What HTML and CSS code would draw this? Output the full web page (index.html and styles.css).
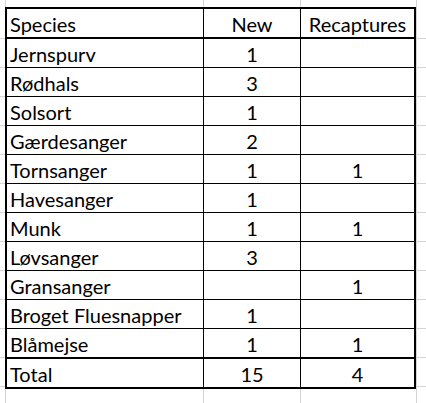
FILE: index.html
```html
<!DOCTYPE html>
<html>
<head>
<meta charset="utf-8">
<link rel="stylesheet" href="styles.css">
</head>
<body>
<div class="sheet">
  <div class="table">
    <div class="cell name head">Species</div><div class="cell num head">New</div><div class="cell num head last">Recaptures</div>
    <div class="cell name">Jernspurv</div><div class="cell num">1</div><div class="cell num last"></div>
    <div class="cell name">Rødhals</div><div class="cell num">3</div><div class="cell num last"></div>
    <div class="cell name">Solsort</div><div class="cell num">1</div><div class="cell num last"></div>
    <div class="cell name">Gærdesanger</div><div class="cell num">2</div><div class="cell num last"></div>
    <div class="cell name">Tornsanger</div><div class="cell num">1</div><div class="cell num last">1</div>
    <div class="cell name">Havesanger</div><div class="cell num">1</div><div class="cell num last"></div>
    <div class="cell name">Munk</div><div class="cell num">1</div><div class="cell num last">1</div>
    <div class="cell name">Løvsanger</div><div class="cell num">3</div><div class="cell num last"></div>
    <div class="cell name">Gransanger</div><div class="cell num"></div><div class="cell num last">1</div>
    <div class="cell name">Broget Fluesnapper</div><div class="cell num">1</div><div class="cell num last"></div>
    <div class="cell name pre">Blåmejse</div><div class="cell num pre">1</div><div class="cell num last pre">1</div>
    <div class="cell name total">Total</div><div class="cell num total">15</div><div class="cell num last total">4</div>
  </div>
</div>
</body>
</html>
```
FILE: styles.css
```css
html, body {
  margin: 0;
  padding: 0;
  background: #ffffff;
}
.sheet {
  width: 426px;
  height: 403px;
  box-sizing: border-box;
  padding: 7px 0 0 5px;
  overflow: hidden;
  background:
    linear-gradient(#d4d4d4, #d4d4d4) 5px 0 / 1px 100% no-repeat,
    linear-gradient(#d4d4d4, #d4d4d4) 203px 0 / 1px 100% no-repeat,
    linear-gradient(#d4d4d4, #d4d4d4) 300px 0 / 1px 100% no-repeat,
    linear-gradient(#d4d4d4, #d4d4d4) 416px 0 / 1px 100% no-repeat,
    repeating-linear-gradient(to bottom, transparent 0, transparent 28px, #d4d4d4 28px, #d4d4d4 29px) 0 10px / 100% 100%;
  background-color: #fff;
}
.table {
  display: grid;
  grid-template-columns: 197px 97px 113px;
  width: 411px;
  border: 2px solid #000;
  box-sizing: border-box;
  background: #fff;
  font-family: Lato, "Open Sans", sans-serif;
  font-size: 20px;
  color: #000;
}
.cell {
  height: 29px;
  box-sizing: border-box;
  border-right: 1px solid #000;
  border-bottom: 1px solid #000;
  display: flex;
  align-items: flex-end;
  padding-bottom: 3px;
  line-height: 20px;
  white-space: nowrap;
}
.cell.last { border-right: none; }
.name { padding-left: 3px; }
.num { justify-content: center; }
.head, .pre { height: 30px; border-bottom-width: 2px; }
.total { height: 28px; border-bottom: none; }
```
